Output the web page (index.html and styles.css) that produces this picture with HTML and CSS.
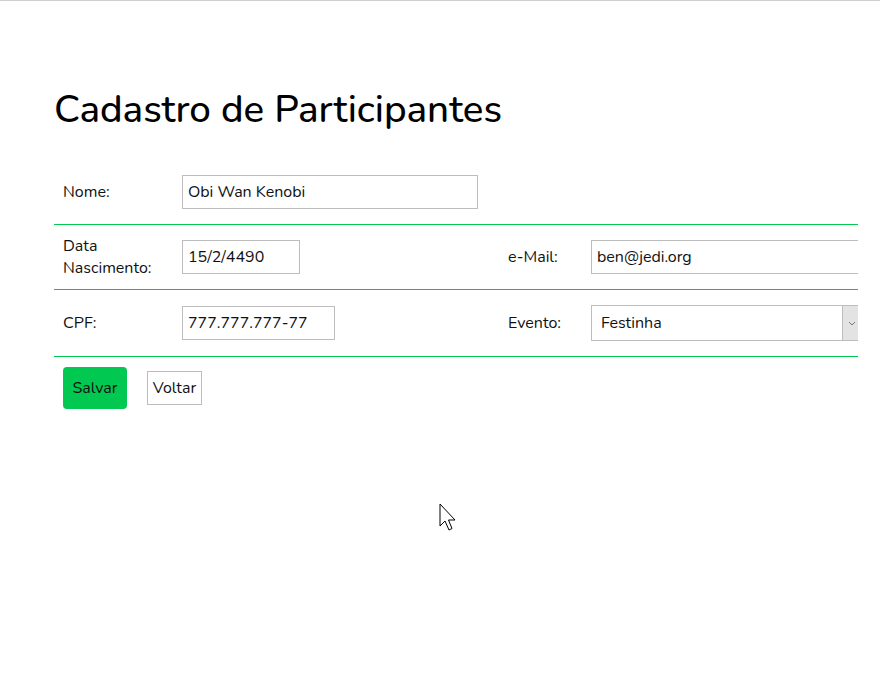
FILE: index.html
```html
<!DOCTYPE html>
<html lang="pt-BR">
<head>
<meta charset="utf-8">
<title>Cadastro de Participantes</title>
<link rel="stylesheet" href="styles.css">
</head>
<body>
<div class="page">
  <h1 class="title">Cadastro de Participantes</h1>
  <form class="form">
    <div class="row">
      <label class="lbl">Nome:</label>
      <div class="cell"><input class="inp inp-nome" type="text" value="Obi Wan Kenobi"></div>
    </div>
    <div class="row">
      <label class="lbl">Data Nascimento:</label>
      <div class="cell"><input class="inp inp-data" type="text" value="15/2/4490"></div>
      <label class="lbl lbl2">e-Mail:</label>
      <div class="cell"><input class="inp inp-email" type="text" value="ben@jedi.org"></div>
    </div>
    <div class="row row-tall">
      <label class="lbl">CPF:</label>
      <div class="cell"><input class="inp inp-cpf" type="text" value="777.777.777-77"></div>
      <label class="lbl lbl2">Evento:</label>
      <div class="cell">
        <div class="sel">
          <select class="sel-native"><option>Festinha</option></select>
          <span class="sel-btn"><svg width="8" height="5" viewBox="0 0 8 5"><path d="M1 1 L4 4 L7 1" fill="none" stroke="#777" stroke-width="1"/></svg></span>
        </div>
      </div>
    </div>
    <div class="actions">
      <button type="button" class="btn btn-save">Salvar</button>
      <button type="button" class="btn btn-back">Voltar</button>
    </div>
  </form>
</div>
<svg class="cursor" width="20" height="30" viewBox="0 0 20 30"><path d="M1 1 L1 23 L6 18 L10 27 L13 25.5 L9.5 17 L16 17 Z" fill="#fff" stroke="#000" stroke-width="1" stroke-linejoin="miter"/></svg>
</body>
</html>
```

FILE: styles.css
```css
html, body {
  margin: 0;
  padding: 0;
  background: #fff;
}
body {
  border-top: 1px solid #cfcfcf;
  font-family: "Nunito", "Lato", "Open Sans", sans-serif;
  font-size: 16px;
  color: #111;
  position: relative;
  height: 679px;
}
.page {
  width: 804px;
  margin-left: 54px;
  overflow: hidden;
  padding-top: 84px;
}
.title {
  margin: 0 0 25px 0;
  font-size: 38.6px;
  font-weight: 500;
  line-height: 50px;
  color: #000;
}
.row {
  display: grid;
  grid-template-columns: 119px 326px 83px 360px;
  align-items: center;
  border-bottom: 1px solid #00c851;
  height: 64px;
  width: 888px;
}
.row-tall {
  height: 66px;
}
.lbl {
  padding: 0 9px;
  line-height: 22px;
}
.lbl2 {
  padding-left: 9px;
}
.cell {
  padding: 0 9px;
  display: flex;
  align-items: center;
}
.inp {
  box-sizing: border-box;
  height: 34px;
  border: 1px solid #bdbdbd;
  padding: 0 5px;
  font-family: inherit;
  font-size: 16px;
  color: #111;
  background: #fff;
  outline: none;
}
.inp-nome { width: 296px; }
.inp-data { width: 118px; }
.inp-cpf { width: 153px; }
.inp-email { width: 300px; }
.sel {
  box-sizing: border-box;
  width: 270px;
  height: 36px;
  border: 1px solid #bdbdbd;
  display: flex;
  background: #fff;
}
.sel-native {
  appearance: none;
  -webkit-appearance: none;
  border: none;
  background: transparent;
  flex: 1;
  font-family: inherit;
  font-size: 16px;
  color: #111;
  padding: 0 9px;
  outline: none;
}
.sel-btn {
  width: 17px;
  background: #e3e3e3;
  border-left: 1px solid #bdbdbd;
  display: flex;
  align-items: center;
  justify-content: center;
}
.actions {
  display: flex;
  align-items: center;
  gap: 20px;
  padding: 10px 9px;
}
.btn {
  font-family: inherit;
  font-size: 16px;
  color: #111;
  cursor: pointer;
}
.btn-save {
  background: #00c851;
  border: none;
  border-radius: 4px;
  height: 42px;
  width: 64px;
  padding: 0;
}
.btn-back {
  background: #fff;
  border: 1px solid #bdbdbd;
  height: 34px;
  width: 55px;
  padding: 0;
}
.cursor {
  position: absolute;
  left: 439px;
  top: 502px;
}
```
